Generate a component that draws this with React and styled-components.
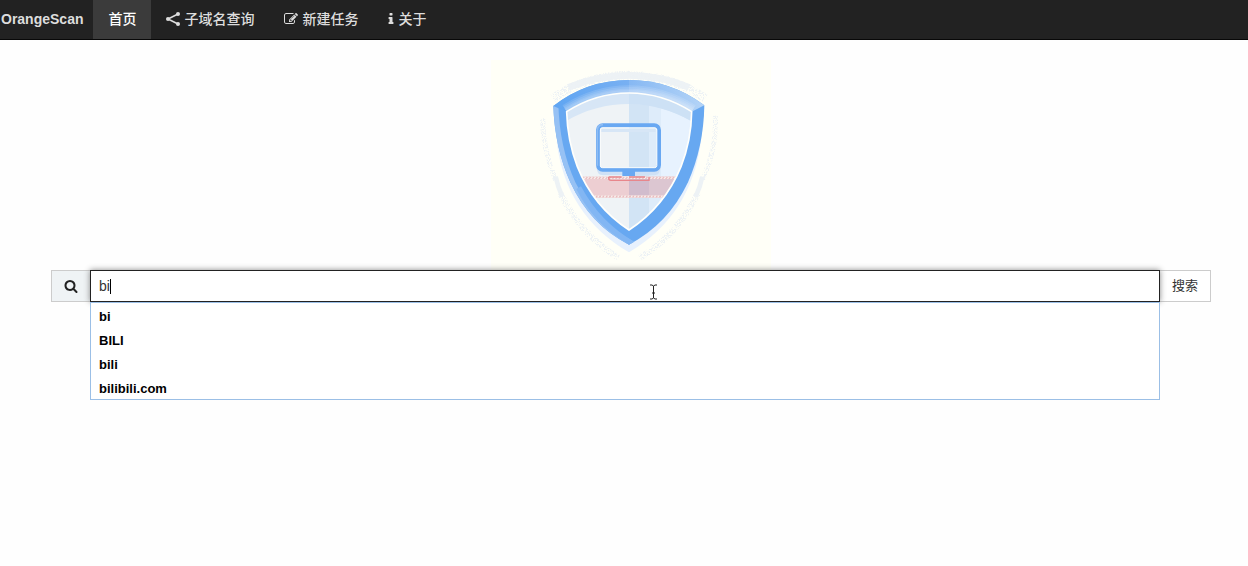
import { useState } from 'react';
import styled, { createGlobalStyle } from 'styled-components';

const palette = {
  page: '#fefefe',
  nav: '#222',
  navActive: '#3b3b3b',
  navText: '#ddd',
  line: '#ccc',
  addon: '#eff3f5',
  suggest: '#9bbfe6',
};

const GlobalStyle = createGlobalStyle`
  * {
    box-sizing: border-box;
  }
  body {
    margin: 0;
    background: ${palette.page};
    color: #333;
    font-family: 'Liberation Sans', 'Noto Sans CJK SC', sans-serif;
    font-size: 14px;
  }
`;

const StyledNav = styled.nav`
  display: flex;
  height: 40px;
  background: ${palette.nav};
  border-bottom: 1px solid #080808;
  font-weight: 500;
  line-height: 38px;
  white-space: nowrap;

  a {
    color: ${palette.navText};
    text-decoration: none;
  }
`;

const Brand = styled.a`
  padding: 0 10px 0 1px;
  font-weight: 700;
`;

const Menus = styled.ul`
  display: flex;
  margin: 0;
  padding: 0;
  list-style: none;
`;

const MenuLink = styled.a`
  display: flex;
  align-items: center;
  gap: 4px;
  height: 39px;
  padding: 0 15px 1px;
  background: ${({ $selected }) => ($selected ? palette.navActive : 'transparent')};
  line-height: 36px;

  && {
    color: ${({ $selected }) => ($selected ? '#fff' : palette.navText)};
  }
`;

const StyledIcon = styled.svg`
  width: ${({ $width }) => $width || 14}px;
  height: 14px;
  fill: currentColor;
`;

const Main = styled.main`
  min-height: calc(100vh - 40px);
  padding: 20px 37px 0 51px;
`;

const Banner = styled.svg`
  display: block;
  width: 280px;
  height: 210px;
  margin: 0 auto;
`;

const SearchForm = styled.form`
  display: flex;
  align-items: flex-start;
`;

const Addon = styled.label`
  display: flex;
  align-items: center;
  justify-content: center;
  width: 39px;
  height: 32px;
  background: ${palette.addon};
  border: 1px solid ${palette.line};
  border-right: 0;
  color: #222;
`;

const Field = styled.div`
  position: relative;
  flex: 1;
`;

const SearchInput = styled.input`
  display: block;
  width: 100%;
  height: 32px;
  padding: 0 8px;
  background: #fff;
  border: 1px solid #222;
  border-radius: 0;
  box-shadow: 0 0 6px #888;
  outline: none;
  color: #333;
  caret-color: transparent;
  font: inherit;
`;

const Caret = styled.span`
  position: absolute;
  top: 9px;
  left: 20px;
  width: 1px;
  height: 15px;
  background: #000;
`;

const Pointer = styled.svg`
  position: absolute;
  top: 14px;
  left: 559px;
  width: 9px;
  height: 16px;
  pointer-events: none;
`;

const Suggestions = styled.ul`
  position: relative;
  margin: 0;
  padding: 0;
  background: #fff;
  border: 1px solid ${palette.suggest};
  list-style: none;
`;

const Suggestion = styled.li`
  padding: 3px 8px 0;
  color: #000;
  font-size: 13px;
  font-weight: 700;
  line-height: 21px;
`;

const SearchButton = styled.button`
  width: 51px;
  height: 32px;
  padding: 0 0 3px;
  background: #fff;
  border: 1px solid ${palette.line};
  border-left: 0;
  color: #333;
  font: inherit;
  font-size: 13px;
`;

const icons = {
  edit:
    'M888 1184l116-116-152-152-116 116v56h96v96h56zm440-720q-16-16-33 1l-350 350q-17 17-1 33t33-1l350-350q17-17 1-33zm80 594v190q0 119-84.5 203.5t-203.5 84.5h-832q-119 0-203.5-84.5t-84.5-203.5v-832q0-119 84.5-203.5t203.5-84.5h832q63 0 117 25 15 7 18 23 3 17-9 29l-49 49q-14 14-32 8-23-6-45-6h-832q-66 0-113 47t-47 113v832q0 66 47 113t113 47h832q66 0 113-47t47-113v-126q0-13 9-22l64-64q15-15 35-7t20 29zm-96-738l288 288-672 672h-288v-288zm444 132l-92 92-288-288 92-92q28-28 68-28t68 28l152 152q28 28 28 68t-28 68z',
  info:
    'M1216 1344v128q0 26-19 45t-45 19h-512q-26 0-45-19t-19-45v-128q0-26 19-45t45-19h64v-384h-64q-26 0-45-19t-19-45v-128q0-26 19-45t45-19h384q26 0 45 19t19 45v576h64q26 0 45 19t19 45zm-128-1152v192q0 26-19 45t-45 19h-256q-26 0-45-19t-19-45v-192q0-26 19-45t45-19h256q26 0 45 19t19 45z',
  search:
    'M1216 832q0-185-131.5-316.5t-316.5-131.5-316.5 131.5-131.5 316.5 131.5 316.5 316.5 131.5 316.5-131.5 131.5-316.5zm512 832q0 52-38 90t-90 38q-54 0-90-38l-343-342q-179 124-399 124-143 0-273.5-55.5t-225-150-150-225-55.5-273.5 55.5-273.5 150-225 225-150 273.5-55.5 273.5 55.5 225 150 150 225 55.5 273.5q0 220-124 399l343 343q37 37 37 90z',
};

const menus = [
  { label: '首页', href: '#home' },
  { label: '子域名查询', href: '#subdomain', icon: 'share' },
  { label: '新建任务', href: '#task', icon: 'edit' },
  { label: '关于', href: '#about', icon: 'info' },
];

const suggestions = ['bi', 'BILI', 'bili', 'bilibili.com'];

const ShareIcon = () => (
  <StyledIcon viewBox="0 0 14 14" aria-hidden="true">
    <path d="M12 2L2 7L12 12" fill="none" stroke="currentColor" strokeWidth="1.6" />
    <circle cx="12" cy="2" r="2" />
    <circle cx="2" cy="7" r="2" />
    <circle cx="12" cy="12" r="2" />
  </StyledIcon>
);

const Icon = ({ name }) => {
  if (name === 'share') return <ShareIcon />;

  return (
    <StyledIcon
      viewBox={name === 'info' ? '512 0 768 1792' : '0 0 1792 1792'}
      $width={name === 'info' ? 6 : 14}
      aria-hidden="true"
    >
      <path d={icons[name]} />
    </StyledIcon>
  );
};

const Navigator = ({ location }) => {
  return (
    <StyledNav>
      <Brand href="#home">OrangeScan</Brand>
      <Menus>
        {menus.map((menu, index) => (
          <li key={menu.label}>
            <MenuLink href={menu.href} $selected={location === index}>
              {menu.icon && <Icon name={menu.icon} />}
              {menu.label}
            </MenuLink>
          </li>
        ))}
      </Menus>
    </StyledNav>
  );
};

const innerTop = 'M245 170Q332 114 432 114Q532 114 620 170';
const inner = `${innerTop}Q619 255 588 335Q539 455 432 525Q325 455 277 335Q247 255 245 170Z`;
const rim = 'M205 153Q305 75 432 75Q558 75 658 151L620 170Q532 114 432 114Q332 114 245 170Z';

const ShieldBanner = () => (
  <Banner viewBox="18 15 840 630" role="img" aria-label="OrangeScan">
    <defs>
      <clipPath id="inner">
        <path d={inner} />
      </clipPath>
      <clipPath id="rim">
        <path d={rim} />
      </clipPath>
      <linearGradient id="top" x1="205" x2="658" gradientUnits="userSpaceOnUse">
        <stop offset="0" stopColor="#5fa5f2" />
        <stop offset="0.5" stopColor="#78b0f2" />
        <stop offset="0.5" stopColor="#86b8f3" />
        <stop offset="1" stopColor="#b4d4f7" />
      </linearGradient>
      <pattern id="stripes" width="10" height="7" patternUnits="userSpaceOnUse" y="365">
        <path d="M0 7L5 0H10L5 7Z" fill="#e9b6ba" />
      </pattern>
      <filter id="speckle" x="-20%" y="-20%" width="140%" height="140%" colorInterpolationFilters="sRGB">
        <feTurbulence type="fractalNoise" baseFrequency="0.4" numOctaves="1" seed="4" />
        <feColorMatrix values="0 0 0 0 0  0 0 0 0 0  0 0 0 0 0  9 0 0 0 -4.2" result="noise" />
        <feComposite in="SourceGraphic" in2="noise" operator="in" />
      </filter>
    </defs>

    <rect x="18" y="15" width="840" height="630" fill="#fffff7" />

    {/* halo */}
    <g fill="none" stroke="#edf2f5">
      <path d="M250 97Q340 61 432 61Q524 61 612 97" strokeWidth="20" />
      <path d="M212 365Q218 395 232 425M652 365Q646 395 632 425" strokeWidth="14" />
    </g>
    <g fill="none" stroke="#edf2f5" filter="url(#speckle)">
      <path d="M204 130Q300 62 432 60Q564 62 660 130" strokeWidth="26" />
      <path d="M173 190Q172 280 212 375M691 182Q696 280 652 375" strokeWidth="15" />
      <path d="M226 415Q290 542 400 608M638 415Q575 542 465 608" strokeWidth="18" />
    </g>

    <path d="M215 260Q242 480 432 592Q622 480 649 250L432 540Z" fill="#e8f1fd" />
    <path d="M205 153Q305 75 432 75Q558 75 658 151Q656 276 609 382Q550 507 432 569Q316 511 256 382Q209 278 205 153Z" fill="#67a8f1" />
    <path d="M205 153Q209 278 256 382Q316 511 432 569L447 560Q330 501 271 382Q223 278 220 145Z" fill="#96c1f4" />
    <path d="M274 402Q326 508 432 569L447 560Q344 500 288 394Z" fill="#82b6f3" />
    <path d={rim} fill="url(#top)" />
    <g clipPath="url(#rim)" fill="none" stroke="#fff" strokeOpacity="0.12">
      <path d={innerTop} strokeWidth="46" />
      <path d={innerTop} strokeWidth="36" />
      <path d={innerTop} strokeWidth="26" />
      <path d={innerTop} strokeWidth="18" />
    </g>

    <g clipPath="url(#inner)">
      <rect x="240" y="110" width="192" height="420" fill="#eff3f6" />
      <rect x="432" y="110" width="200" height="420" fill="#e7f2fe" />
      <rect x="432" y="110" width="60" height="420" fill="#d2e4f5" />
      <path d="M492 110H528V430Q512 460 492 475Z" fill="#deecfa" />
      <path d="M245 197Q332 147 432 147Q532 147 620 199V100H245Z" fill="#d7e6f6" />
      <path d="M432 115Q532 114 620 170V199Q530 148 432 147Z" fill="#cde1f5" />
      <rect x="245" y="365" width="380" height="64" fill="#edced2" />
      <rect x="432" y="365" width="200" height="64" fill="#dcc6d1" />
      <rect x="432" y="372" width="60" height="50" fill="#d1bccd" />
      <rect x="245" y="365" width="380" height="7" fill="#f8f3f0" />
      <rect x="245" y="421" width="380" height="7" fill="#f8f3f0" />
      <rect x="245" y="365" width="380" height="7" fill="url(#stripes)" />
      <rect x="245" y="421" width="380" height="7" fill="url(#stripes)" />
    </g>
    <path d={inner} fill="none" stroke="#fffffc" strokeWidth="5" />

    {/* monitor */}
    <path d="M335 340Q337 361 354 361H508Q524 361 526 340" fill="#cfe1f6" />
    <rect x="339" y="211" width="183" height="133" rx="14" fill="none" stroke="#69a8f2" strokeWidth="12" />
    <path d="M337 332V226Q337 209 354 209" fill="none" stroke="#8dbcf4" strokeWidth="5" />
    <path d="M516 222V334" fill="none" stroke="#8dbcf4" strokeWidth="5" />
    <rect x="346" y="219" width="169" height="119" rx="6" fill="none" stroke="#fbfdfc" strokeWidth="3" />
    <rect x="349" y="221" width="163" height="10" fill="#d7e6f6" />
    <path d="M412 348H450V363H412Z" fill="#69a8f2" />
    <path d="M371 366V370Q371 376 378 376H492V366M371 366H410M432 366H480" fill="none" stroke="#e8868c" strokeWidth="4" />
  </Banner>
);

const SearchBar = () => {
  const [keyword, setKeyword] = useState('bi');

  return (
    <SearchForm onSubmit={(e) => e.preventDefault()}>
      <Addon htmlFor="keyword" aria-label="搜索">
        <Icon name="search" />
      </Addon>
      <Field>
        <SearchInput
          id="keyword"
          type="text"
          autoComplete="off"
          value={keyword}
          onChange={(e) => setKeyword(e.target.value)}
        />
        <Caret />
        <Suggestions>
          {suggestions.map((text) => (
            <Suggestion key={text} onClick={() => setKeyword(text)}>
              {text}
            </Suggestion>
          ))}
        </Suggestions>
        <Pointer viewBox="0 0 9 16" aria-hidden="true">
          <path
            d="M1 1H3L4.5 2L6 1H8M4.5 2V14M1 15H3L4.5 14L6 15H8M3 9H6"
            fill="none"
            stroke="#222"
          />
        </Pointer>
      </Field>
      <SearchButton type="submit">搜索</SearchButton>
    </SearchForm>
  );
};

const App = () => {
  return (
    <>
      <GlobalStyle />
      <Navigator location={0} />
      <Main>
        <ShieldBanner />
        <SearchBar />
      </Main>
    </>
  );
};

export default App;
